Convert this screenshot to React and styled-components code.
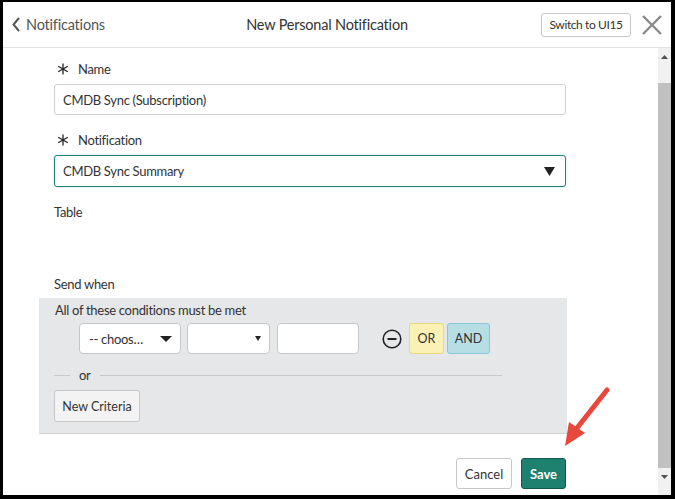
import React from 'react';
import styled, { createGlobalStyle } from 'styled-components';

const Global = createGlobalStyle`
  html, body { margin: 0; padding: 0; background: #000; }
  body { font-family: Lato, "Open Sans", sans-serif; color: #333; letter-spacing: -0.3px; }
  * { box-sizing: border-box; }
`;

const Frame = styled.div`
  position: relative;
  width: 675px;
  height: 499px;
  padding: 2px 4px 4px 3px;
  background: #000;
`;

const Window = styled.div`
  background: #fff;
  height: 100%;
  display: flex;
  flex-direction: column;
`;

const Header = styled.header`
  flex: none;
  height: 46px;
  display: flex;
  align-items: center;
  border-bottom: 1px solid #e2e2e2;
  padding: 0 9px 0 9px;
`;

const BackLink = styled.a`
  display: flex;
  align-items: center;
  gap: 6px;
  color: #555;
  font-size: 14.5px;
  letter-spacing: -0.2px;
  text-decoration: none;
  width: 95px;
`;

const Title = styled.div`
  flex: 1;
  text-align: center;
  font-size: 14.5px;
  letter-spacing: -0.2px;
  color: #333;
  padding-left: 6px;
`;

const HeaderRight = styled.div`
  display: flex;
  align-items: center;
  gap: 11px;
`;

const SmallButton = styled.button`
  font-family: inherit;
  font-size: 12px;
  letter-spacing: -0.4px;
  color: #333;
  background: #fff;
  border: 1px solid #c8c8c8;
  border-radius: 3px;
  height: 24px;
  width: 90px;
  padding: 0;
`;

const Body = styled.div`
  flex: 1;
  min-height: 0;
  display: flex;
`;

const Content = styled.div`
  flex: 1;
  padding: 11px 92px 0 51px;
  display: flex;
  flex-direction: column;
`;

const Label = styled.div`
  display: flex;
  align-items: center;
  gap: 9px;
  height: 20px;
  font-size: 13px;
  color: #333;
  margin-top: ${p => p.$mt || 0}px;
  padding-left: ${p => (p.$req ? 3 : 0)}px;
`;

const Input = styled.div`
  height: ${p => p.$h || 31}px;
  margin-top: 5px;
  border: 1px solid ${p => (p.$focus ? '#1f8476' : '#cfcfcf')};
  border-radius: 3px;
  display: flex;
  align-items: center;
  justify-content: space-between;
  padding: 0 10px 0 8px;
  font-size: 13px;
  color: #333;
  background: #fff;
  box-shadow: ${p => (p.$focus ? '0 0 2px rgba(31,132,118,0.3)' : 'none')};
`;

const Panel = styled.div`
  margin: 4px -1px 0 -15px;
  background: #e6e7e8;
  border-bottom: 1px solid #cfd0d1;
  padding: 2px 65px 11px 15px;
  display: flex;
  flex-direction: column;
`;

const PanelText = styled.div`
  font-size: 13px;
  height: 20px;
  line-height: 20px;
  padding-left: 1px;
`;

const CondRow = styled.div`
  display: flex;
  align-items: center;
  margin: 3px 0 0 25px;
  height: 31px;
`;

const CondBox = styled.div`
  width: ${p => p.$w}px;
  height: 31px;
  margin-right: ${p => p.$mr || 0}px;
  background: #fff;
  border: 1px solid #c6c6c6;
  border-radius: 4px;
  display: flex;
  align-items: center;
  justify-content: space-between;
  padding: 0 8px 0 9px;
  font-size: 13px;
  color: #333;
`;

const IconWrap = styled.span`
  display: flex;
  margin: 0 7px 0 23px;
`;

const Toggle = styled.button`
  font-family: inherit;
  height: 31px;
  width: ${p => p.$w}px;
  margin-right: 3px;
  font-size: 12.5px;
  color: #333;
  border-radius: 3px;
  border: 1px solid ${p => (p.$kind === 'or' ? '#e6d97a' : '#86c6d6')};
  background: ${p => (p.$kind === 'or' ? '#fbf1b5' : '#b7dee5')};
  padding: 0;
`;

const OrLine = styled.div`
  display: flex;
  align-items: center;
  gap: 9px;
  height: 20px;
  margin-top: 11px;
  font-size: 13px;
  color: #333;
  &::before {
    content: '';
    width: 16px;
    height: 1px;
    background: #c9c9c9;
  }
  &::after {
    content: '';
    flex: 1;
    height: 1px;
    background: #c9c9c9;
  }
`;

const GreyButton = styled.button`
  align-self: flex-start;
  font-family: inherit;
  margin-top: 5px;
  height: 32px;
  width: 86px;
  padding: 0;
  font-size: 12.5px;
  color: #333;
  background: #f3f3f3;
  border: 1px solid #c8c8c8;
  border-radius: 3px;
`;

const Footer = styled.div`
  display: flex;
  justify-content: flex-end;
  gap: 9px;
  margin-top: 24px;
`;

const FooterButton = styled.button`
  font-family: inherit;
  height: 31px;
  width: ${p => (p.$primary ? 45 : 56)}px;
  padding: 0;
  font-size: 13px;
  font-weight: ${p => (p.$primary ? 700 : 400)};
  color: ${p => (p.$primary ? '#fff' : '#333')};
  background: ${p => (p.$primary ? '#1e806f' : '#fff')};
  border: 1px solid ${p => (p.$primary ? '#14594e' : '#c8c8c8')};
  border-radius: 3px;
`;

const Scrollbar = styled.div`
  width: 13px;
  flex: none;
  background: #f1f1f1;
  display: flex;
  flex-direction: column;
  align-items: center;
`;

const ScrollArrow = styled.div`
  height: 17px;
  display: flex;
  align-items: center;
  justify-content: center;
`;

const Thumb = styled.div`
  width: 100%;
  height: 385px;
  margin-top: 18px;
  background: #c1c1c1;
`;

const Arrow = styled.svg`
  position: absolute;
  left: 555px;
  top: 380px;
  pointer-events: none;
`;

const Asterisk = () => (
  <svg width="12" height="12" viewBox="0 0 12 12">
    <g stroke="#222" strokeWidth="1.3">
      <line x1="6" y1="0.5" x2="6" y2="11.5" />
      <line x1="1.2" y1="3.2" x2="10.8" y2="8.8" />
      <line x1="1.2" y1="8.8" x2="10.8" y2="3.2" />
    </g>
  </svg>
);

const Triangle = ({ w = 11, h = 7 }) => (
  <svg width={w} height={h} viewBox={`0 0 ${w} ${h}`}>
    <polygon points={`0,0 ${w},0 ${w / 2},${h}`} fill="#222" />
  </svg>
);

export default function App() {
  return (
    <>
      <Global />
      <Frame>
        <Window>
          <Header>
            <BackLink>
              <svg width="8" height="15" viewBox="0 0 8 15">
                <polyline points="7,1 1.5,7.5 7,14" fill="none" stroke="#555" strokeWidth="2" />
              </svg>
              Notifications
            </BackLink>
            <Title>New Personal Notification</Title>
            <HeaderRight>
              <SmallButton>Switch to UI15</SmallButton>
              <svg width="20" height="20" viewBox="0 0 20 20">
                <g stroke="#8a8a8a" strokeWidth="2.4">
                  <line x1="1" y1="1" x2="19" y2="19" />
                  <line x1="19" y1="1" x2="1" y2="19" />
                </g>
              </svg>
            </HeaderRight>
          </Header>
          <Body>
            <Content>
              <Label $req>
                <Asterisk />
                Name
              </Label>
              <Input>CMDB Sync (Subscription)</Input>
              <Label $req $mt={15}>
                <Asterisk />
                Notification
              </Label>
              <Input $focus $h={32}>
                CMDB Sync Summary
                <Triangle w={11} h={9} />
              </Input>
              <Label $mt={15}>Table</Label>
              <Label $mt={52}>Send when</Label>
              <Panel>
                <PanelText>All of these conditions must be met</PanelText>
                <CondRow>
                  <CondBox $w={102} $mr={6}>
                    -- choos…
                    <Triangle w={12} h={6} />
                  </CondBox>
                  <CondBox $w={83} $mr={7}>
                    <span />
                    <Triangle w={6} h={5} />
                  </CondBox>
                  <CondBox $w={82} />
                  <IconWrap>
                    <svg width="20" height="20" viewBox="0 0 20 20">
                      <circle cx="10" cy="10" r="8.8" fill="none" stroke="#222" strokeWidth="1.6" />
                      <line x1="5.5" y1="10" x2="14.5" y2="10" stroke="#222" strokeWidth="2" />
                    </svg>
                  </IconWrap>
                  <Toggle $kind="or" $w={35}>OR</Toggle>
                  <Toggle $kind="and" $w={43}>AND</Toggle>
                </CondRow>
                <OrLine>or</OrLine>
                <GreyButton>New Criteria</GreyButton>
              </Panel>
              <Footer>
                <FooterButton>Cancel</FooterButton>
                <FooterButton $primary>Save</FooterButton>
              </Footer>
            </Content>
            <Scrollbar>
              <ScrollArrow>
                <svg width="7" height="4" viewBox="0 0 7 4"><polygon points="0,4 7,4 3.5,0" fill="#505050" /></svg>
              </ScrollArrow>
              <Thumb />
              <ScrollArrow>
                <svg width="7" height="4" viewBox="0 0 7 4"><polygon points="0,0 7,0 3.5,4" fill="#505050" /></svg>
              </ScrollArrow>
            </Scrollbar>
          </Body>
        </Window>
        <Arrow width="60" height="70" viewBox="0 0 60 70">
          <line x1="52" y1="10" x2="22" y2="48" stroke="#e8473b" strokeWidth="5" strokeLinecap="round" />
          <polygon points="10,66 14,42 30,53" fill="#e8473b" />
        </Arrow>
      </Frame>
    </>
  );
}
